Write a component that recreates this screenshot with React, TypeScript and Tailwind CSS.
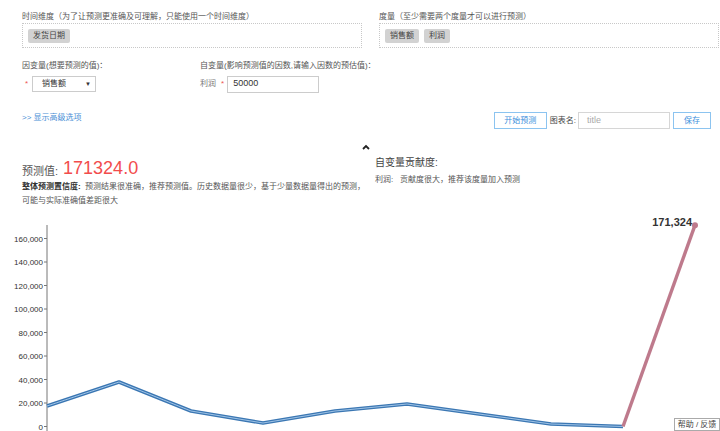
import React from "react"

const font = { fontFamily: '"Liberation Sans", "Noto Sans CJK SC", sans-serif' }

const yTicks = [0, 20000, 40000, 60000, 80000, 100000, 120000, 140000, 160000]
const zeroY = 211.5
const perUnit = 23.5 / 20000

const blue = [191, 167, 196, 208, 196, 189, 199, 209, 211.5]

function Tag({ children }: { children: React.ReactNode }) {
  return (
    <span className="h-[14px] px-[5px] flex items-center bg-[#d2d2d2] text-[#444] text-[8px] rounded-[2px]">
      {children}
    </span>
  )
}

function Chart() {
  const pts = blue.map((y, i) => `${47 + i * 72},${y}`).join(" ")
  const last = `${47 + 8 * 72},${blue[8]}`
  const endY = zeroY - 171324 * perUnit
  return (
    <svg width="720" height="216" className="block">
      <line x1="47" y1="10" x2="47" y2="216" stroke="#777" strokeWidth="1" />
      {yTicks.map((v) => {
        const y = zeroY - v * perUnit
        return (
          <g key={v}>
            <line x1="44" y1={y} x2="47" y2={y} stroke="#777" />
            <text x="43" y={y + 3} textAnchor="end" fontSize="8" fill="#333" style={font}>
              {v.toLocaleString("en-US")}
            </text>
          </g>
        )
      })}
      <polyline points={pts} fill="none" stroke="#3b77b3" strokeWidth="3.6" strokeLinejoin="round" />
      <polyline points={pts} fill="none" stroke="#9fc3e6" strokeWidth="1" strokeLinejoin="round" />
      <polyline points={`${last} 695,${endY}`} fill="none" stroke="#be7a8c" strokeWidth="3.4" />
      <circle cx="695" cy={endY} r="3" fill="#be7a8c" />
      <text x="692" y="11" textAnchor="end" fontSize="11" fontWeight="bold" fill="#333" style={font}>
        171,324
      </text>
    </svg>
  )
}

export default function App() {
  return (
    <div className="relative w-[720px] h-[431px] overflow-hidden bg-white text-[#555]" style={font}>
      {/* dimensions */}
      <div className="flex gap-[17px] pl-[22px] pt-[10px]">
        <div className="w-[340px]">
          <div className="h-[13px] leading-[13px] text-[8px]">时间维度（为了让预测更准确及可理解，只能使用一个时间维度）</div>
          <div className="h-[25px] border border-dotted border-[#c8c8c8] flex items-center gap-[5px] px-[5px]">
            <Tag>发货日期</Tag>
          </div>
        </div>
        <div className="w-[340px]">
          <div className="h-[13px] leading-[13px] text-[8px]">度量（至少需要两个度量才可以进行预测）</div>
          <div className="h-[25px] border border-dotted border-[#c8c8c8] flex items-center gap-[5px] px-[5px]">
            <Tag>销售额</Tag>
            <Tag>利润</Tag>
          </div>
        </div>
      </div>

      {/* variables */}
      <div className="flex pl-[22px] pt-[12px]">
        <div className="w-[178px]">
          <div className="h-[12px] leading-[12px] text-[8px]">因变量(想要预测的值)：</div>
          <div className="mt-[4px] flex items-center h-[16px]">
            <span className="w-[10px] pl-[3px] text-[#e55] text-[8px]">*</span>
            <div className="w-[64px] h-[16px] border border-[#ccc] flex items-center justify-between pl-[9px] pr-[4px] text-[8px] text-[#333]">
              <span>销售额</span>
              <span className="text-[6px]">▼</span>
            </div>
          </div>
        </div>
        <div>
          <div className="h-[12px] leading-[12px] text-[8px]">自变量(影响预测值的因数,请输入因数的预估值)：</div>
          <div className="mt-[4px] flex items-center h-[16px] text-[8px]">
            <span className="text-[#777]">利润</span>
            <span className="ml-[5px] text-[#e55]">*</span>
            <div className="ml-[3px] w-[92px] h-[17px] border border-[#ccc] flex items-center pl-[5px] text-[9px] text-[#333]">
              50000
            </div>
          </div>
        </div>
      </div>

      {/* actions */}
      <div className="mt-[20px] h-[17px] flex items-center justify-between pl-[22px] pr-[9px]">
        <span className="text-[8px] text-[#4a8fd6] pb-[6px]">&gt;&gt; 显示高级选项</span>
        <div className="flex items-center h-[17px] text-[8px]">
          <button className="w-[53px] h-[17px] border border-[#8cc4f0] text-[#3c8fdc] bg-white">开始预测</button>
          <span className="ml-[3px] text-[#444]">图表名:</span>
          <div className="ml-[2px] w-[92px] h-[17px] border border-[#d6d6d6] flex items-center pl-[8px] text-[9px] text-[#aaa]">title</div>
          <button className="ml-[3px] w-[38px] h-[17px] border border-[#8cc4f0] text-[#3c8fdc] bg-white">保存</button>
        </div>
      </div>

      {/* caret */}
      <div className="h-[26px] pt-[15px] flex justify-center pl-[12px]">
        <svg width="8" height="6" viewBox="0 0 8 6">
          <path d="M1 5 L4 2 L7 5" fill="none" stroke="#222" strokeWidth="1.8" />
        </svg>
      </div>

      {/* results */}
      <div className="h-[60px] flex pl-[22px]">
        <div className="w-[353px]">
          <div className="h-[25px] flex items-end">
            <span className="text-[11px] text-[#555] leading-[18px]">预测值:</span>
            <span className="ml-[5px] text-[18px] leading-[24px] text-[#f24c4c]">171324.0</span>
          </div>
          <div className="text-[8px] leading-[14px] text-[#555]">
            <span className="font-bold text-[#333]">整体预测置信度:</span>&nbsp; 预测结果很准确，推荐预测值。历史数据量很少，基于少量数据量得出的预测，
            <br />
            可能与实际准确值差距很大
          </div>
        </div>
        <div>
          <div className="h-[16px] leading-[16px] text-[10px] text-[#444]">自变量贡献度:</div>
          <div className="mt-[2px] text-[8px] leading-[14px] text-[#555]">利润:&nbsp;&nbsp; 贡献度很大，推荐该度量加入预测</div>
        </div>
      </div>

      <Chart />

      <div className="absolute right-0 bottom-0 w-[46px] h-[13px] border border-[#aaa] bg-white flex items-center justify-center text-[8px] text-[#444]">
        帮助 / 反馈
      </div>
    </div>
  )
}
